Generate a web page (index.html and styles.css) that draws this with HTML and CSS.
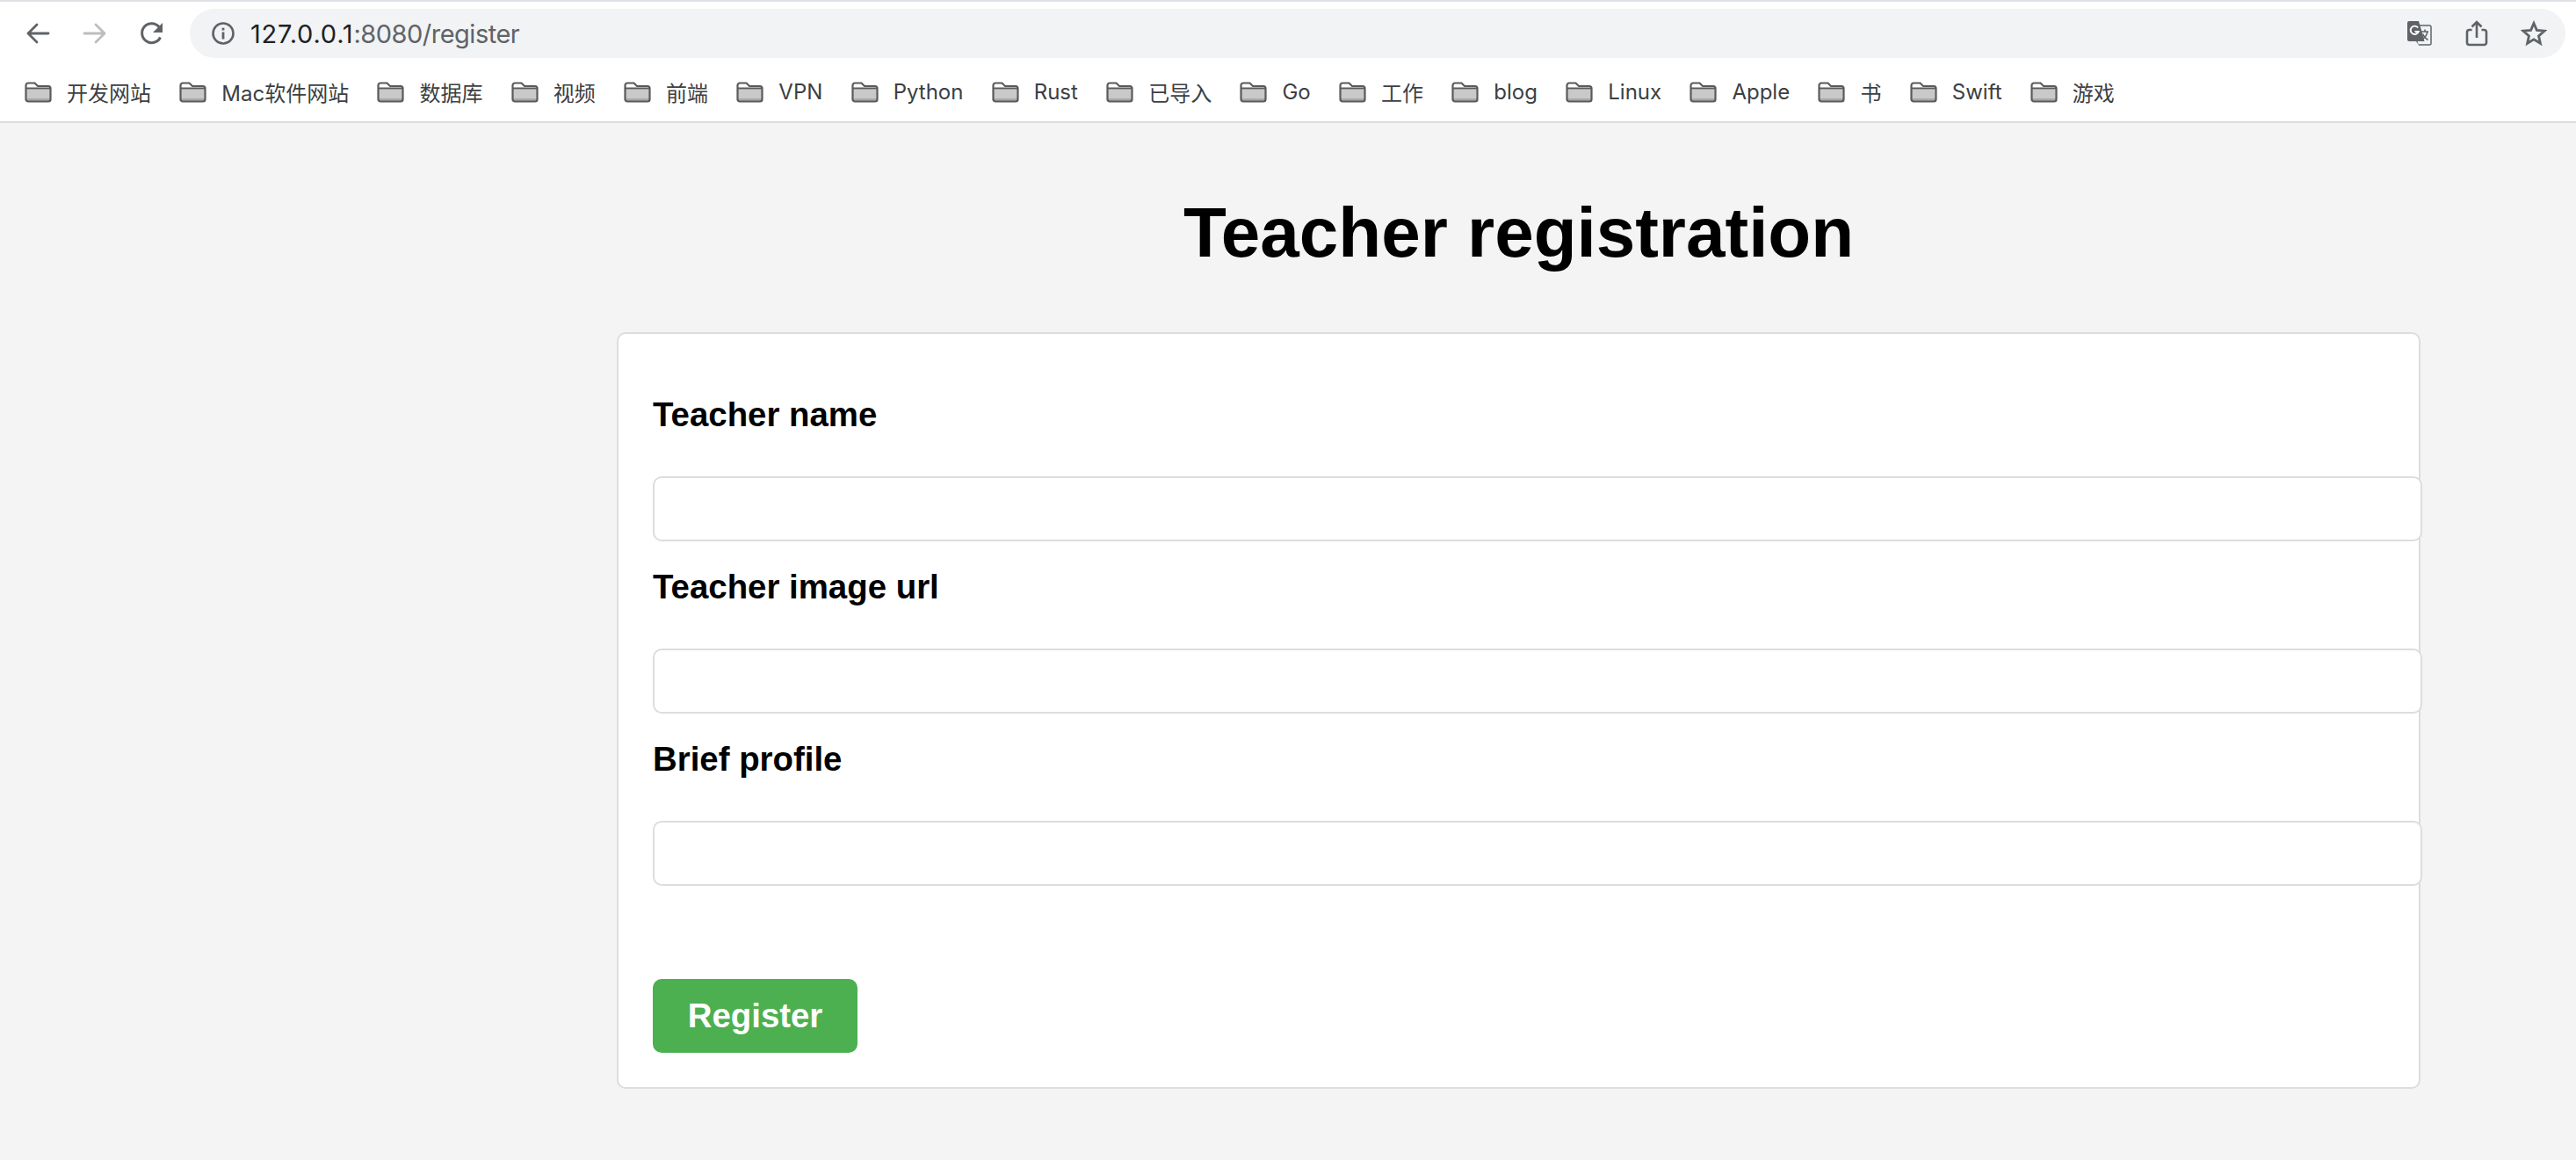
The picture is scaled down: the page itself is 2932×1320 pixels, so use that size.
FILE: index.html
```html
<!DOCTYPE html>
<html lang="en">
<head>
  <meta charset="UTF-8" />
  <title>Teacher registration</title>
  <link rel="stylesheet" href="styles.css">
</head>
<body>
  <svg class="defs" width="0" height="0">
    <symbol id="folder" viewBox="0 0 31 24">
      <path d="M1.5 7.5V4a2.5 2.5 0 0 1 2.5-2.5h7.5l3.5 3.5H27a2.5 2.5 0 0 1 2.5 2.5V20a2.5 2.5 0 0 1-2.5 2.5H4A2.5 2.5 0 0 1 1.5 20z" fill="#fff"/>
      <path d="M2 8.5h27V20a2 2 0 0 1-2 2H4a2 2 0 0 1-2-2z" fill="#c9c9c9"/>
      <path d="M2 19h27v1.500a1.500 1.500 0 0 1-1.500 1.500h-24A1.500 1.500 0 0 1 2 20.500z" fill="#a9a9a9"/>
      <path d="M1.500 7.500V4A2.500 2.500 0 0 1 4 1.500h7.500L15 5h12a2.500 2.500 0 0 1 2.500 2.500V20a2.500 2.500 0 0 1-2.500 2.500H4A2.500 2.500 0 0 1 1.500 20zM1.500 7.500h28" fill="none" stroke="#5a5a5c" stroke-width="2.200"/>
    </symbol>
  </svg>

  <div class="top-strip"></div>
  <header class="toolbar">
    <div class="nav-icons">
      <svg class="nav-icon" viewBox="0 0 30 30"><path d="M27 15H4M14 5 4 15l10 10" fill="none" stroke="#5f6368" stroke-width="2.800" stroke-linecap="round" stroke-linejoin="round"/></svg>
      <svg class="nav-icon" viewBox="0 0 30 30"><path d="M3 15h23M16 5l10 10-10 10" fill="none" stroke="#bcbdbf" stroke-width="2.800" stroke-linecap="round" stroke-linejoin="round"/></svg>
      <svg class="nav-icon" viewBox="0 0 30 30"><path d="M24.500 19.500A11 11 0 1 1 23 7.500" fill="none" stroke="#5f6368" stroke-width="3"/><path d="M27 3v11H16z" fill="#5f6368"/></svg>
    </div>
    <div class="omnibox">
      <svg class="info-icon" viewBox="0 0 28 28"><circle cx="14" cy="14" r="11.500" fill="none" stroke="#5f6368" stroke-width="2.600"/><rect x="12.600" y="12.500" width="2.800" height="8" fill="#5f6368"/><rect x="12.600" y="7.700" width="2.800" height="2.800" fill="#5f6368"/></svg>
      <div class="url"><span class="host">127.0.0.1</span>:8080/register</div>
      <div class="omni-actions">
        <svg class="omni-icon" viewBox="0 0 30 30">
          <path d="M11 6h15.500A1.500 1.500 0 0 1 28 7.500v19a1.500 1.500 0 0 1-1.500 1.500H14" fill="#f1f3f4" stroke="#5f6368" stroke-width="1.500"/>
          <path d="M3 1h11l3.500 12 3 11h-8l1.500 4.500-3-4.500H3a2 2 0 0 1-2-2V3a2 2 0 0 1 2-2z" fill="#5f6368"/>
          <path d="M13.200 8.500A4.700 4.700 0 1 0 13.800 13H9.500" fill="none" stroke="#fff" stroke-width="1.900"/>
          <path d="M17 13h8M21 10.500V13M24 13c-1 4.500-3.500 7.500-6.500 9M18.500 15.500c1 3 3.500 5.500 6 7" fill="none" stroke="#5f6368" stroke-width="1.500"/>
        </svg>
        <svg class="omni-icon" viewBox="0 0 30 30"><path d="M9.500 11H6.500A2.500 2.500 0 0 0 4 13.500v12A2.500 2.500 0 0 0 6.500 28h17a2.500 2.500 0 0 0 2.500-2.500v-12a2.500 2.500 0 0 0-2.500-2.500h-3M15 20V2.500M9.500 7.500 15 2l5.500 5.500" fill="none" stroke="#5f6368" stroke-width="2.600"/></svg>
        <svg class="omni-icon" viewBox="0 0 30 30"><path d="m15 3.500 3.400 7.900 8.600.8-6.500 5.700 1.900 8.400-7.400-4.400-7.400 4.400 1.900-8.400L3 12.200l8.600-.8z" fill="none" stroke="#5f6368" stroke-width="2.800"/></svg>
      </div>
    </div>
  </header>

  <nav class="bookmarks">
    <a class="bookmark"><svg class="folder"><use href="#folder"/></svg>开发网站</a>
    <a class="bookmark"><svg class="folder"><use href="#folder"/></svg>Mac软件网站</a>
    <a class="bookmark"><svg class="folder"><use href="#folder"/></svg>数据库</a>
    <a class="bookmark"><svg class="folder"><use href="#folder"/></svg>视频</a>
    <a class="bookmark"><svg class="folder"><use href="#folder"/></svg>前端</a>
    <a class="bookmark"><svg class="folder"><use href="#folder"/></svg>VPN</a>
    <a class="bookmark"><svg class="folder"><use href="#folder"/></svg>Python</a>
    <a class="bookmark"><svg class="folder"><use href="#folder"/></svg>Rust</a>
    <a class="bookmark"><svg class="folder"><use href="#folder"/></svg>已导入</a>
    <a class="bookmark"><svg class="folder"><use href="#folder"/></svg>Go</a>
    <a class="bookmark"><svg class="folder"><use href="#folder"/></svg>工作</a>
    <a class="bookmark"><svg class="folder"><use href="#folder"/></svg>blog</a>
    <a class="bookmark"><svg class="folder"><use href="#folder"/></svg>Linux</a>
    <a class="bookmark"><svg class="folder"><use href="#folder"/></svg>Apple</a>
    <a class="bookmark"><svg class="folder"><use href="#folder"/></svg>书</a>
    <a class="bookmark"><svg class="folder"><use href="#folder"/></svg>Swift</a>
    <a class="bookmark"><svg class="folder"><use href="#folder"/></svg>游戏</a>
  </nav>

  <main class="page">
    <h1>Teacher registration</h1>
    <form class="card">
      <div class="field">
        <label for="name">Teacher name</label>
        <input id="name" type="text">
      </div>
      <div class="field">
        <label for="image">Teacher image url</label>
        <input id="image" type="text">
      </div>
      <div class="field">
        <label for="profile">Brief profile</label>
        <input id="profile" type="text">
      </div>
      <button type="button" class="submit">Register</button>
    </form>
  </main>
</body>
</html>
```

FILE: styles.css
```css
:root {
  --bg: #f4f4f4;
  --border: #dddddd;
  --icon: #5f6368;
  --green: #4caf50;
}
* { box-sizing: border-box; }
html, body { height: 100%; }
body {
  margin: 0;
  background-color: var(--bg);
  color: #000;
  font-family: "Liberation Sans", Arial, sans-serif;
  overflow: hidden;
}
.defs { position: absolute; }

/* browser chrome */
.top-strip { height: 2px; background-color: #dee1e6; }
.toolbar {
  height: 72px; padding: 8px 12px 8px 28px;
  background-color: #fff;
  display: flex; align-items: center;
}
.nav-icons { display: flex; gap: 35px; width: 188px; }
.nav-icon { width: 30px; height: 30px; }
.omnibox {
  flex: 1; height: 56px; padding: 0 21px 0 24px;
  background-color: #f1f3f4; border-radius: 28px;
  display: flex; align-items: center;
}
.info-icon { width: 28px; height: 28px; margin-right: 17px; }
.url {
  flex: 1;
  font-family: Inter, "Noto Sans", sans-serif; font-size: 29px; letter-spacing: -0.500px;
  color: #5f6368;
}
.host { color: #202124; letter-spacing: 0.800px; }
.omni-actions { display: flex; gap: 35px; }
.omni-icon { width: 30px; height: 30px; }

.bookmarks {
  height: 66px; padding: 0 0 3px 28px;
  background-color: #fff;
  border-bottom: 2px solid #dcdcdc;
  display: flex; align-items: center; gap: 32.300px;
}
.bookmark {
  display: flex; align-items: center; gap: 17px;
  font-family: Inter, "Noto Sans CJK SC", sans-serif; font-size: 24px;
  color: #3c4043; white-space: nowrap;
}
.folder { width: 31px; height: 24px; }

/* register form */
.page { padding-left: 702px; width: 2755px; }
h1 {
  margin: 0; padding-top: 79px; height: 238px;
  font-size: 80px; line-height: 92px; text-align: center;
}
.card {
  height: 861px; padding: 40px 40px 40px 39px;
  background-color: #fff;
  border: 2px solid var(--border); border-radius: 10px;
}
.field { height: 196px; }
label {
  display: block; height: 122px; padding-top: 30px;
  font-size: 38.400px; font-weight: bold; line-height: 44px;
}
input {
  display: block; width: calc(100% + 44px); height: 74px; padding: 0 20px;
  background-color: #fff;
  border: 2px solid var(--border); border-radius: 10px;
}
.submit {
  display: block; margin-top: 106px; width: 233px; height: 84px; padding: 0;
  background-color: var(--green); color: #fff;
  border: none; border-radius: 10px;
  font-family: inherit; font-size: 38.400px; font-weight: bold;
}
```
